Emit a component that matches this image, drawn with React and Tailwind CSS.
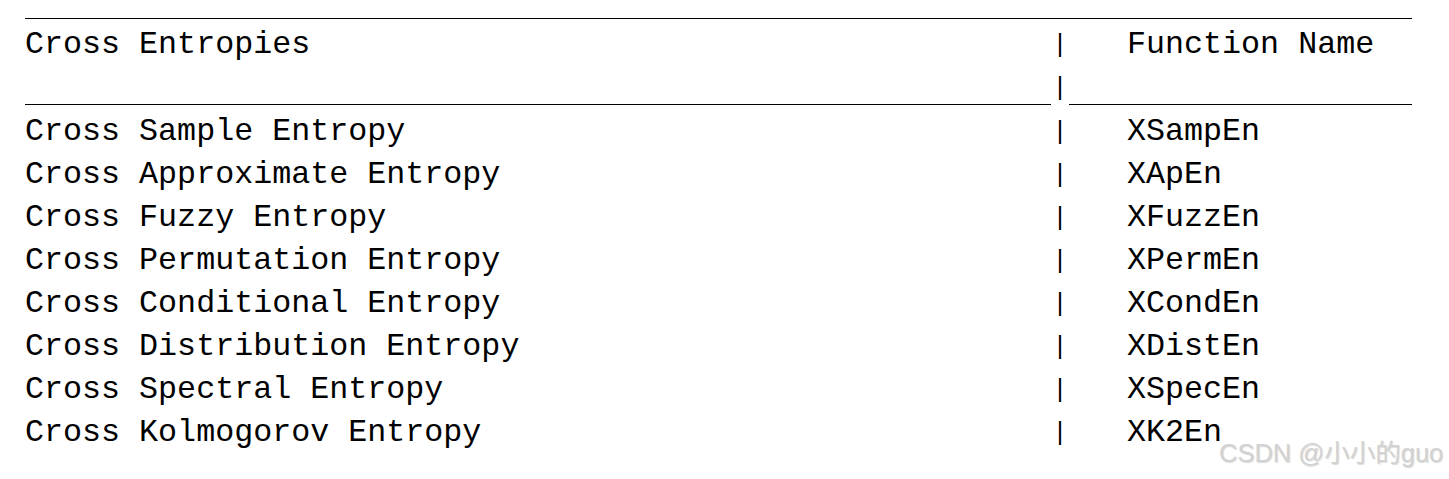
import React from "react";

const rows = [
  ["Cross Sample Entropy", "XSampEn"],
  ["Cross Approximate Entropy", "XApEn"],
  ["Cross Fuzzy Entropy", "XFuzzEn"],
  ["Cross Permutation Entropy", "XPermEn"],
  ["Cross Conditional Entropy", "XCondEn"],
  ["Cross Distribution Entropy", "XDistEn"],
  ["Cross Spectral Entropy", "XSpecEn"],
  ["Cross Kolmogorov Entropy", "XK2En"],
];

const mono = { fontFamily: '"Liberation Mono", "Courier New", monospace' };

function Pipe() {
  return (
    <div className="flex justify-center h-[43px] text-[25px] leading-[43px]">|</div>
  );
}

export default function App() {
  return (
    <div className="relative w-[1449px] h-[479px] bg-white overflow-hidden text-black">
      <div className="pl-[25px] pt-[18px]" style={mono}>
        <div className="w-[1387px] border-t border-black">
          <div className="mt-[5px] grid grid-cols-[1026px_18px_1fr] text-[31.7px] leading-[43px] h-[43px]">
            <div className="whitespace-pre">Cross Entropies</div>
            <Pipe />
            <div className="pl-[58px] whitespace-pre">Function Name</div>
          </div>
          <div className="grid grid-cols-[1026px_18px_1fr] text-[31.7px] leading-[43px] h-[38px]">
            <div className="border-b border-black"></div>
            <div className="flex justify-center items-start h-[38px] text-[25px] leading-[43px]">|</div>
            <div className="border-b border-black"></div>
          </div>
          <div className="pt-[6px]">
            {rows.map(([a, b]) => (
              <div key={b} className="grid grid-cols-[1026px_18px_1fr] text-[31.7px] leading-[43px] h-[43px]">
                <div className="whitespace-pre">{a}</div>
                <Pipe />
                <div className="pl-[58px] whitespace-pre">{b}</div>
              </div>
            ))}
          </div>
        </div>
      </div>
      <div
        className="absolute left-[1219px] top-[437px] text-[25.5px] leading-[32px] text-[#d2d2d2] whitespace-pre"
        style={{ fontFamily: '"Liberation Sans", "Noto Sans CJK SC", sans-serif', textShadow: "1px 1px 1px rgba(0,0,0,0.15)" }}
      >
        CSDN @小小的guo
      </div>
    </div>
  );
}
